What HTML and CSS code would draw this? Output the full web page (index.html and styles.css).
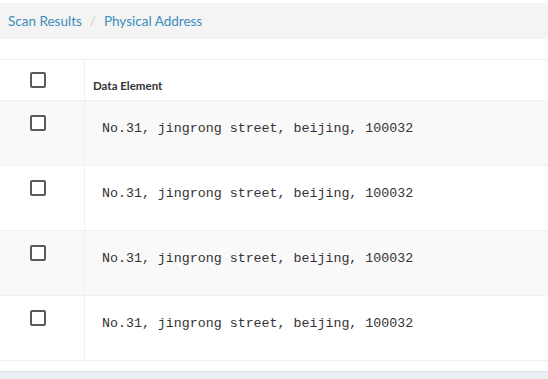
FILE: index.html
```html
<!DOCTYPE html>
<html lang="en">
<head>
    <meta charset="UTF-8">
    <meta name="viewport" content="width=device-width, initial-scale=1.0">
    <title>Physical Address</title>
    <link rel="stylesheet" href="styles.css">
</head>
<body>
    <ol class="breadcrumb">
        <li><a href="#">Scan Results</a></li>
        <li class="sep">/</li>
        <li><a href="#">Physical Address</a></li>
    </ol>

    <table class="results">
        <thead>
            <tr>
                <th class="check-col"><span class="checkbox"></span></th>
                <th class="element-col">Data Element</th>
            </tr>
        </thead>
        <tbody>
            <tr>
                <td class="check-col"><span class="checkbox"></span></td>
                <td class="value">No.31, jingrong street, beijing, 100032</td>
            </tr>
            <tr>
                <td class="check-col"><span class="checkbox"></span></td>
                <td class="value">No.31, jingrong street, beijing, 100032</td>
            </tr>
            <tr>
                <td class="check-col"><span class="checkbox"></span></td>
                <td class="value">No.31, jingrong street, beijing, 100032</td>
            </tr>
            <tr>
                <td class="check-col"><span class="checkbox"></span></td>
                <td class="value">No.31, jingrong street, beijing, 100032</td>
            </tr>
        </tbody>
    </table>

    <div class="footer"></div>
</body>
</html>
```

FILE: styles.css
```css
body {
    font-family: 'Lato', 'Open Sans', sans-serif;
    margin: 0;
    padding: 0;
    background: white;
    color: #333;
}
.breadcrumb {
    display: flex;
    align-items: center;
    gap: 8px;
    list-style: none;
    margin: 3px 0 0 0;
    padding: 0 8px;
    height: 36px;
    background: #f4f4f4;
    font-size: 13.5px;
}
.breadcrumb a {
    color: #3c8dbc;
    text-decoration: none;
}
.breadcrumb .sep {
    color: #ccc;
}
.results {
    width: 100%;
    border-collapse: collapse;
    margin-top: 20px;
    border-top: 1px solid #f0f0f0;
}
.results th,
.results td {
    border-bottom: 1px solid #f0f0f0;
}
.check-col {
    width: 54px;
    padding: 0 0 0 30px;
    text-align: left;
    vertical-align: top;
    border-right: 1px solid #f0f0f0;
}
.results thead tr {
    height: 41px;
}
.results thead .check-col {
    padding-top: 12px;
}
.element-col {
    text-align: left;
    vertical-align: bottom;
    padding: 0 8px 8px 8px;
    font-size: 11.5px;
    font-weight: bold;
    color: #333;
}
.results tbody tr {
    height: 65px;
}
.results tbody tr:nth-child(odd) {
    background: #f9f9f9;
}
.results tbody .check-col {
    padding-top: 14px;
}
.checkbox {
    display: inline-block;
    width: 12px;
    height: 12px;
    border: 2px solid #5a5a5a;
    border-radius: 2px;
    background: white;
}
.value {
    vertical-align: top;
    padding: 19px 8px 0 17px;
    font-family: 'Liberation Mono', monospace;
    font-size: 13.3px;
    line-height: 18px;
    color: #333;
}
.footer {
    margin-top: 10px;
    height: 12px;
    background: #ecf0f5;
    border-top: 1px solid #dde2e8;
}
```
